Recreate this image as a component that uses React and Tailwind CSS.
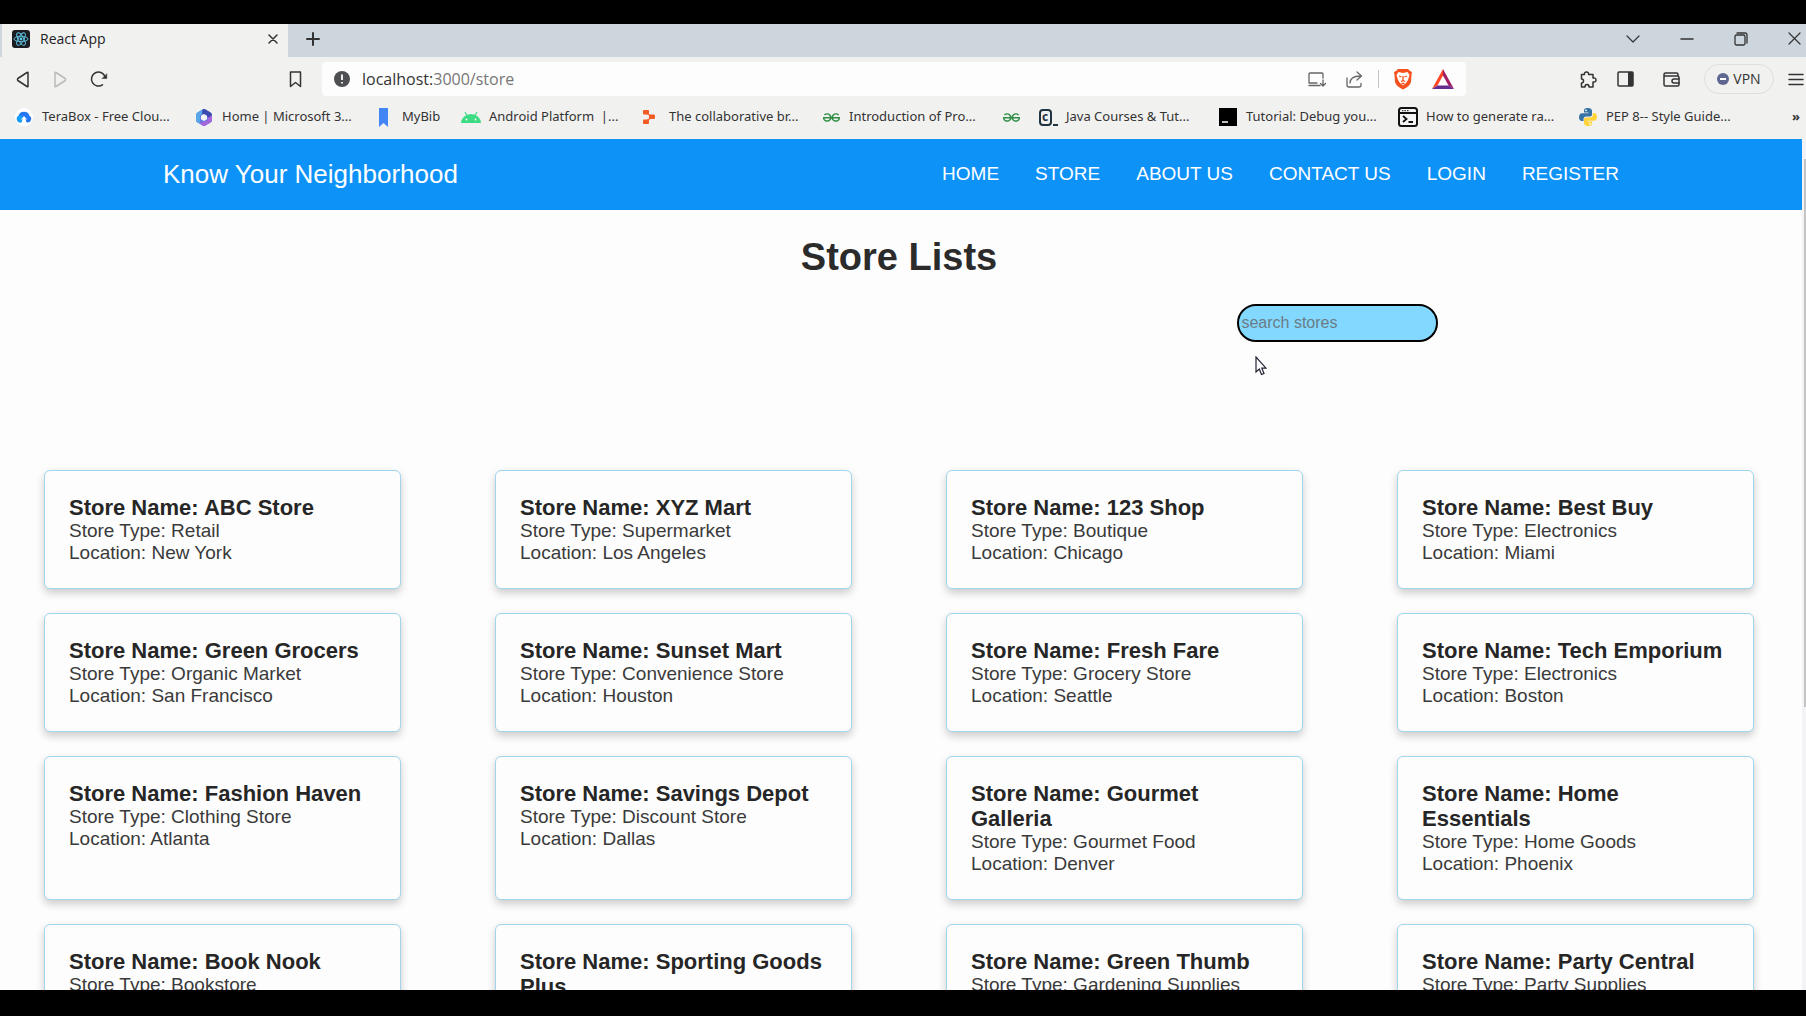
import React from "react";
import { SiGeeksforgeeks } from "react-icons/si";

const line = { fill: "none", stroke: "#333", strokeWidth: 1.5, strokeLinecap: "round", strokeLinejoin: "round" };

function TeraBoxIcon() {
  return (
    <svg width="18" height="18" viewBox="0 0 18 18">
      <circle cx="9" cy="9" r="9" fill="#fff" />
      <path d="M5.5 14.5A3.6 3.6 0 0 1 3.600 7.800 5.500 5 0 0 1 14.400 7.800 3.600 3.600 0 0 1 12.500 14.500Q11.500 14.500 11 13.500V12H7V13.500Q6.500 14.500 5.500 14.500Z" fill="#2377f5" />
      <path d="M5.500 14.500A3.600 3.600 0 0 1 3.600 7.800Q6 7 7.500 9L7 13.500Q6.500 14.500 5.500 14.500Z" fill="#14a0f8" />
      <path d="M9 8 12 11.500H10.300V15H7.700V11.500H6Z" fill="#fff" />
    </svg>
  );
}
function Microsoft365Icon() {
  return (
    <svg width="18" height="19" viewBox="0 0 18 19">
      <path d="M7.500 1.500Q9 0.500 10.500 1.500L15.500 4.500Q17 5.500 17 7V12Q17 13.500 15.500 14.500L10.500 17.500Q9 18.500 7.500 17.500L2.500 14.500Q1 13.500 1 12V7Q1 5.500 2.500 4.500Z" fill="#6478e0" />
      <path d="M8 1.300 2.500 4.500Q1 5.500 1 7V12Q1 13.500 2.500 14.500L5 15.500V8L11 3Z" fill="#58a6ea" />
      <path d="M17 7V12Q17 13.500 15.500 14.500L10.500 17.500Q9 18.500 7.500 17.500L4.500 15.500 12.500 12.500 13.500 7Z" fill="#a565dc" />
      <path d="M7.500 1.500Q9 0.500 10.500 1.500L15.500 4.500Q17 5.500 17 7L14 9.500 7 5.500Z" fill="#3b4bb0" />
      <path d="M9 6 12 7.800V11.200L9 13 6 11.200V7.800Z" fill="#f4f4f4" />
    </svg>
  );
}
function MyBibIcon() {
  return (
    <svg width="18" height="19" viewBox="0 0 18 19">
      <path d="M4 0H13V19L8.500 15 4 19Z" fill="#4285f4" />
    </svg>
  );
}
function AndroidIcon() {
  return (
    <svg width="20" height="12" viewBox="0 0 20 12">
      <path d="M0 12A10 9 0 0 1 20 12Z" fill="#3ddc84" />
      <path d="M4 1 6 4.500M16 1 14 4.500" stroke="#3ddc84" strokeWidth="1.200" />
      <circle cx="5.500" cy="8.500" r="0.900" fill="#fff" />
      <circle cx="14.500" cy="8.500" r="0.900" fill="#fff" />
    </svg>
  );
}
function CollabIcon() {
  return (
    <svg width="18" height="16" viewBox="0 0 18 16">
      <path d="M3 3 10 8 3 13" fill="none" stroke="#f26b3a" strokeWidth="1.500" />
      <rect x="1" y="1" width="6" height="4.500" rx="1" fill="#f15a24" />
      <rect x="7" y="5.500" width="6" height="4.500" rx="1" fill="#f15a24" />
      <rect x="1" y="10.500" width="6" height="4.500" rx="1" fill="#f15a24" />
    </svg>
  );
}
function CodecademyIcon() {
  return (
    <span className="flex items-end gap-px text-[#1f3340]">
      <span className="flex h-[17px] w-[13px] items-center justify-center rounded-sm border-2 border-[#1f3340] text-xs font-bold">c</span>
      <span className="h-0.5 w-[5px] bg-[#1f3340]" />
    </span>
  );
}
function TutorialIcon() {
  return (
    <svg width="18" height="18" viewBox="0 0 18 18">
      <rect width="18" height="18" fill="#000" />
      <path d="M3 14H9" stroke="#fff" strokeWidth="1.500" />
    </svg>
  );
}
function TerminalIcon() {
  return (
    <svg width="20" height="20" viewBox="0 0 20 20" fill="none" stroke="#111" strokeWidth="2">
      <rect x="1" y="1" width="18" height="18" rx="2.500" fill="#f6f6f6" />
      <path d="M1 6H19" />
      <path d="M4 3.700H11" strokeWidth="1" strokeDasharray="1.500 1" />
      <path d="M5 9 8.500 12 5 15M10.500 15H15" strokeWidth="1.800" />
    </svg>
  );
}
function PythonIcon() {
  return (
    <svg width="20" height="20" viewBox="0 0 20 20">
      <path d="M10 1C6.500 1 6 2.300 6 4V5.500H10.500V6.300H4C2 6.300 1 8 1 10.300S2 14 4 14H5.500V12C5.500 10.500 6.700 9.500 8 9.500H12C13.200 9.500 14 8.500 14 7.500V4C14 2 12.500 1 10 1Z" fill="#3772a4" />
      <path d="M10 19C13.500 19 14 17.700 14 16V14.500H9.500V13.700H16C18 13.700 19 12 19 9.700S18 6 16 6H14.800V8C14.800 9.500 13.500 10.500 12 10.500H8C6.800 10.500 6 11.500 6 12.500V16C6 18 7.500 19 10 19Z" fill="#ffd43b" />
      <circle cx="8" cy="3.300" r="0.900" fill="#fff" />
      <circle cx="12" cy="16.700" r="0.900" fill="#fff" />
    </svg>
  );
}
function GfgIcon() {
  return <SiGeeksforgeeks size={17} color="#2f8d46" />;
}

const bookmarks = [
  { label: "TeraBox - Free Clou...", icon: TeraBoxIcon, width: "w-[180px]" },
  { label: "Home | Microsoft 3...", icon: Microsoft365Icon, width: "w-[180px]" },
  { label: "MyBib", icon: MyBibIcon, width: "w-[87px]" },
  { label: "Android Platform  |...", icon: AndroidIcon, width: "w-[180px]" },
  { label: "The collaborative br...", icon: CollabIcon, width: "w-[180px]" },
  { label: "Introduction of Pro...", icon: GfgIcon, width: "w-[180px]" },
  { label: "", icon: GfgIcon, width: "w-[37px]" },
  { label: "Java Courses & Tut...", icon: CodecademyIcon, width: "w-[180px]" },
  { label: "Tutorial: Debug you...", icon: TutorialIcon, width: "w-[180px]" },
  { label: "How to generate ra...", icon: TerminalIcon, width: "w-[180px]" },
  { label: "PEP 8-- Style Guide...", icon: PythonIcon, width: "w-[180px]" },
];

const stores = [
  ["ABC Store", "Retail", "New York"],
  ["XYZ Mart", "Supermarket", "Los Angeles"],
  ["123 Shop", "Boutique", "Chicago"],
  ["Best Buy", "Electronics", "Miami"],
  ["Green Grocers", "Organic Market", "San Francisco"],
  ["Sunset Mart", "Convenience Store", "Houston"],
  ["Fresh Fare", "Grocery Store", "Seattle"],
  ["Tech Emporium", "Electronics", "Boston"],
  ["Fashion Haven", "Clothing Store", "Atlanta"],
  ["Savings Depot", "Discount Store", "Dallas"],
  ["Gourmet Galleria", "Gourmet Food", "Denver"],
  ["Home Essentials", "Home Goods", "Phoenix"],
  ["Book Nook", "Bookstore", ""],
  ["Sporting Goods Plus", "", ""],
  ["Green Thumb", "Gardening Supplies", ""],
  ["Party Central", "Party Supplies", ""],
];

function TabStrip() {
  return (
    <div className="flex h-[33px] shrink-0 items-stretch bg-[#cdd6dc] pl-0.5">
      <div className="flex w-[286px] items-center bg-[#f1f1f0] px-2.5 pb-1">
        <svg width="18" height="18" viewBox="0 0 18 18">
          <rect width="18" height="18" rx="3" fill="#1b1d22" />
          <g fill="none" stroke="#61c6e6" strokeWidth="0.900">
            <ellipse cx="9" cy="9" rx="7" ry="2.700" />
            <ellipse cx="9" cy="9" rx="7" ry="2.700" transform="rotate(60 9 9)" />
            <ellipse cx="9" cy="9" rx="7" ry="2.700" transform="rotate(120 9 9)" />
          </g>
          <circle cx="9" cy="9" r="1.400" fill="#61c6e6" />
        </svg>
        <span className="ml-2.5 grow text-sm text-[#222]">React App</span>
        <button aria-label="Close tab">
          <svg width="10" height="10" viewBox="0 0 10 10" {...line}><path d="M1 1 9 9M9 1 1 9" /></svg>
        </button>
      </div>
      <button aria-label="New tab" className="ml-[18px] pb-1">
        <svg width="14" height="14" viewBox="0 0 14 14" {...line} strokeWidth="2"><path d="M7 1V13M1 7H13" /></svg>
      </button>
      <div className="ml-auto flex items-center pb-1">
        <button aria-label="Search tabs" className="mr-10">
          <svg width="14" height="8" viewBox="0 0 14 8" {...line} strokeWidth="1.200"><path d="M1 1 7 7 13 1" /></svg>
        </button>
        <button aria-label="Minimize" className="mr-10">
          <svg width="14" height="2" viewBox="0 0 14 2" {...line}><path d="M1 1H13" /></svg>
        </button>
        <button aria-label="Restore" className="mr-10">
          <svg width="14" height="14" viewBox="0 0 14 14" {...line} strokeWidth="1.300">
            <rect x="1" y="3" width="10" height="10" rx="1.500" />
            <path d="M3 1H11A2 2 0 0 1 13 3V11" />
          </svg>
        </button>
        <button aria-label="Close window" className="mr-[5px]">
          <svg width="13" height="13" viewBox="0 0 13 13" {...line} strokeWidth="1.200"><path d="M1 1 12 12M12 1 1 12" /></svg>
        </button>
      </div>
    </div>
  );
}

function Toolbar() {
  return (
    <div className="flex h-11 shrink-0 items-center bg-[#f1f1f0]">
      <button aria-label="Back" className="ml-4">
        <svg width="15" height="17" viewBox="0 0 15 17" {...line}><path d="M12 1.500V15.500Q12 16 11 15.500L1.800 9.500Q1 8.500 1.800 7.500L11 1.500Q12 1 12 1.500Z" /></svg>
      </button>
      <button aria-label="Forward" className="ml-[22px]">
        <svg width="15" height="17" viewBox="0 0 15 17" {...line} stroke="#bbb"><path d="M2 1.500V15.500Q2 16 3 15.500L12.200 9.500Q13 8.500 12.200 7.500L3 1.500Q2 1 2 1.500Z" /></svg>
      </button>
      <button aria-label="Reload" className="ml-[22px]">
        <svg width="18" height="18" viewBox="0 0 18 18" {...line}>
          <path d="M12.500 14.800A7 7 0 1 1 15 6.500" />
          <path d="M16.800 4V8.500H12.300Z" fill="#333" strokeWidth="0.500" />
        </svg>
      </button>
      <button aria-label="Bookmark this page" className="ml-[181px]">
        <svg width="13" height="17" viewBox="0 0 13 17" {...line}><path d="M1.500 1H11.500V15.500L6.500 11.500 1.500 15.500Z" /></svg>
      </button>
      <div className="ml-5 flex h-[34px] grow items-center rounded bg-[#fdfdfd] pr-3 pl-3">
        <svg width="16" height="16" viewBox="0 0 16 16">
          <circle cx="8" cy="8" r="8" fill="#4d4f52" />
          <path d="M8 3.500V9M8 11V12.500" stroke="#fff" strokeWidth="1.800" />
        </svg>
        <div className="ml-3 grow text-base text-[#777]"><span className="text-[#333]">localhost:</span>3000/store</div>
        <button aria-label="Install app">
          <svg width="18" height="15" viewBox="0 0 18 15" {...line} stroke="#666" strokeWidth="1.300">
            <path d="M15 6V2Q15 1 14 1H2Q1 1 1 2V11H9M1 13.500H12M15 8V13.500M12.500 11.500 15 14 17.500 11.500" />
          </svg>
        </button>
        <button aria-label="Share" className="ml-5">
          <svg width="17" height="17" viewBox="0 0 17 17" {...line} stroke="#666" strokeWidth="1.300">
            <path d="M1 7V14Q1 16 3 16H13Q15 16 15 14V12.500M4 12Q4.500 5 14 5M11 1 15.500 5 11 9" />
          </svg>
        </button>
        <span className="ml-[15px] h-[18px] w-px bg-[#c4c4c8]" />
        <button aria-label="Brave Shields" className="ml-3.5">
          <svg width="20" height="22" viewBox="0 0 20 22">
            <path d="M5 1H15L17 3 19 4 18.500 7 18 14Q17 18 10 21.500 3 18 2 14L1.500 7 1 4 3 3Z" fill="#f4511e" />
            <path d="M5.500 4 10 5 14.500 4 16.500 7 15 12 13 15 10 17.500 7 15 5 12 3.500 7Z" fill="#fff" />
            <path d="M6 8 8.500 9M14 8 11.500 9M10 8V12.500L8 13.500M10 12.500 12 13.500M8.500 15.500H11.500" fill="none" stroke="#f4511e" strokeWidth="1.300" />
          </svg>
        </button>
        <button aria-label="Brave Rewards" className="ml-[19px]">
          <svg width="22" height="20" viewBox="0 0 22 20">
            <path d="M11 0 0 20 5.500 16.500 11 6.500Z" fill="#ff4724" />
            <path d="M11 0 22 20 16.500 16.500 11 6.500Z" fill="#9e1f63" />
            <path d="M0 20H22L16.500 16.500H5.500Z" fill="#662d91" />
          </svg>
        </button>
      </div>
      <div className="ml-[113px] flex items-center">
        <button aria-label="Extensions">
          <svg width="18" height="17" viewBox="0 0 18 17" {...line}>
            <path d="M2.500 3.500H5.500Q5 1 7.500 1T9.500 3.500H14V7Q17 6.500 17 9T14 11V16H10Q10 13.500 8 13.500T6 16H2.500V12Q4.500 12 4.500 10T2.500 8Z" />
          </svg>
        </button>
        <button aria-label="Sidebar" className="ml-5">
          <svg width="17" height="16" viewBox="0 0 17 16"><rect x="1" y="1" width="15" height="14" rx="1" fill="none" stroke="#333" strokeWidth="1.500" /><path d="M11 1H16V15H11Z" fill="#333" /></svg>
        </button>
        <button aria-label="Wallet" className="ml-[29px]">
          <svg width="17" height="15" viewBox="0 0 17 15" {...line}>
            <path d="M15 4V2.500Q15 1 13.500 1H2.500Q1 1 1 2.500V12.500Q1 14 2.500 14H14.500Q16 14 16 12.500V5.500Q16 4 14.500 4H1" />
            <path d="M16 7H11Q9 7 9 9T11 11H16" />
          </svg>
        </button>
        <button className="ml-6 flex h-[30px] w-[70px] items-center justify-center gap-1 rounded-full border border-[#dedee2] text-sm text-[#333]">
          <svg width="12" height="12" viewBox="0 0 12 12"><circle cx="6" cy="6" r="6" fill="#5f6690" /><path d="M3 6H9" stroke="#fff" strokeWidth="2" /></svg>
          VPN
        </button>
        <button aria-label="Menu" className="mr-0.5 ml-3.5">
          <svg width="16" height="13" viewBox="0 0 16 13" {...line}><path d="M1 1.500H15M1 6.500H15M1 11.500H15" /></svg>
        </button>
      </div>
    </div>
  );
}

function BookmarksBar() {
  return (
    <div className="flex h-[38px] shrink-0 items-center bg-[#f1f1f0] pr-1.5 pb-1.5 pl-3.5 font-['Noto_Sans','Open_Sans',sans-serif] text-[13px] text-[#333]">
      {bookmarks.map(({ label, icon: Icon, width }, i) => (
        <a key={i} href="#bookmark" aria-label={label || "GeeksforGeeks"} className={"flex h-6 shrink-0 items-center whitespace-pre " + width}>
          <span className="flex w-5 shrink-0 justify-center">
            <Icon />
          </span>
          {label && <span className="ml-2">{label}</span>}
        </a>
      ))}
      <button aria-label="More bookmarks" className="ml-auto font-bold">»</button>
    </div>
  );
}

function StoreCard({ store }) {
  const [name, type, location] = store;
  return (
    <li className="rounded-md border border-[#9fd6ee] bg-[#fdfdfd] p-6 text-[19px] leading-[22px] text-[#3a3a3a] shadow-[0_4px_8px_rgba(0,0,0,0.2)]">
      <h2 className="text-[22px] leading-[25px] font-bold text-[#262626]">Store Name: {name}</h2>
      {type && <p>Store Type: {type}</p>}
      {location && <p>Location: {location}</p>}
    </li>
  );
}

export default function App() {
  return (
    <div className="flex h-screen flex-col overflow-hidden border-t-[24px] border-b-[26px] border-black bg-[#fdfdfd] font-['Open_Sans',sans-serif]">
      <TabStrip />
      <Toolbar />
      <BookmarksBar />
      <div className="flex min-h-0 grow font-['Liberation_Sans',Arial,sans-serif]">
        <div className="min-w-0 grow overflow-hidden">
          <header className="flex h-[71px] items-center justify-between bg-[#0d92f8] pr-[183px] pl-[163px] text-white">
            <a href="#home" className="text-[26px]">Know Your Neighborhood</a>
            <nav className="flex gap-9 text-[19px]">
              <a href="#home">HOME</a>
              <a href="#store">STORE</a>
              <a href="#about">ABOUT US</a>
              <a href="#contact">CONTACT US</a>
              <a href="#login">LOGIN</a>
              <a href="#register">REGISTER</a>
            </nav>
          </header>
          <main className="pr-1">
            <h1 className="pt-6 text-center text-[38px] leading-[46px] font-bold text-[#2b2b2b]">Store Lists</h1>
            <div className="relative mt-6 mr-[20%] flex justify-end">
              <input
                type="search"
                aria-label="search stores"
                placeholder="search stores"
                className="h-[38px] w-[201px] appearance-none rounded-full border-2 border-black bg-[#82d8ff] px-0.5 text-base placeholder:text-[#6a7c85]"
              />
              <svg className="absolute top-[52px] right-[171px]" width="12" height="20" viewBox="0 0 12 20">
                <path d="M1 1V16L4.300 13 6.500 18.500 9 17.500 6.800 12.200H11Z" fill="#fff" stroke="#223" strokeWidth="1.200" />
              </svg>
            </div>
            <ul className="mt-32 grid grid-cols-4 gap-x-[94px] gap-y-6 px-11">
              {stores.map((store) => (
                <StoreCard key={store[0]} store={store} />
              ))}
            </ul>
          </main>
        </div>
        <div className="w-1 shrink-0 bg-[#f3f3f5] pt-5 pl-0.5">
          <div className="h-[66%] bg-[#c4c4c4]" />
        </div>
      </div>
    </div>
  );
}
